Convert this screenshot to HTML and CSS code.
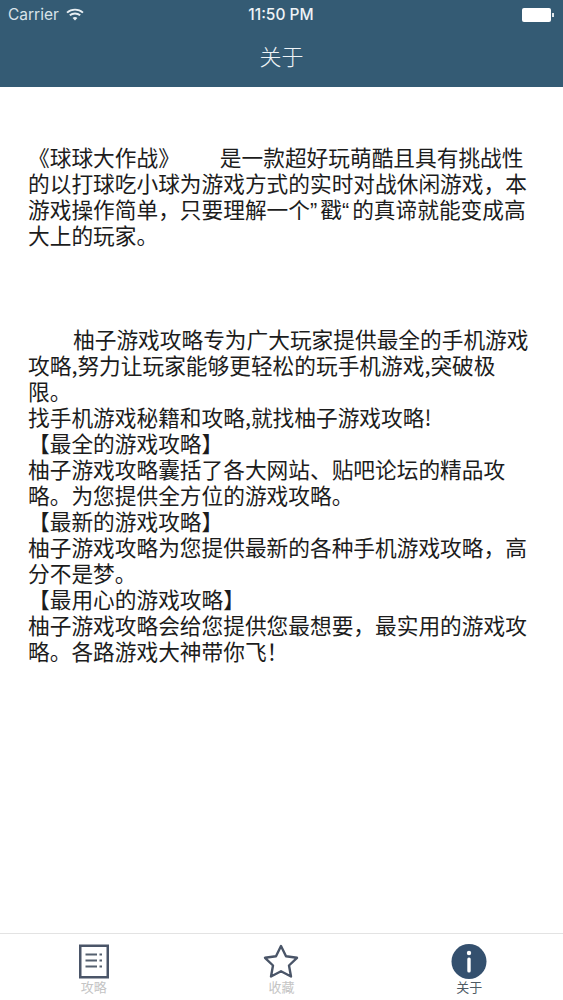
FILE: index.html
```html
<!DOCTYPE html>
<html lang="zh">
<head>
<meta charset="utf-8">
<title>关于</title>
<link rel="stylesheet" href="styles.css">
</head>
<body>
<div class="app">
  <header class="top">
    <div class="status">
      <div class="status-left">
        <span>Carrier</span>
        <svg class="wifi" viewBox="0 0 18 13" width="18" height="13"><path d="M1 4.600C5.600.6 12.400.6 17 4.600" fill="none" stroke="#e9eff3" stroke-width="1.900"/><path d="M3.800 7.300c3-2.500 7.400-2.500 10.400 0" fill="none" stroke="#e9eff3" stroke-width="1.900"/><path d="M6.600 9.900c1.400-1.100 3.400-1.100 4.800 0L9 12.400z" fill="#e9eff3"/></svg>
      </div>
      <div class="status-time">11:50 PM</div>
      <div class="status-right">
        <span class="battery"></span><span class="battery-tip"></span>
      </div>
    </div>
    <div class="nav">关于</div>
  </header>
  <main class="content">
    <p class="para-first">《球球大作战》<span class="gap"></span>是一款超好玩萌酷且具有挑战性的以打球吃小球为游戏方式的实时对战休闲游戏，本游戏操作简单，只要理解一个<span class="quote">”</span>戳<span class="quote">“</span>的真谛就能变成高大上的玩家。</p>
    <p class="para-second"><span class="indent"></span>柚子游戏攻略专为广大玩家提供最全的手机游戏攻略,努力让玩家能够更轻松的玩手机游戏,突破极限。<br>找手机游戏秘籍和攻略,就找柚子游戏攻略!<br>【最全的游戏攻略】<br>柚子游戏攻略囊括了各大网站、贴吧论坛的精品攻略。为您提供全方位的游戏攻略。<br>【最新的游戏攻略】<br>柚子游戏攻略为您提供最新的各种手机游戏攻略，高分不是梦。<br>【最用心的游戏攻略】<br>柚子游戏攻略会给您提供您最想要，最实用的游戏攻略。各路游戏大神带你飞！</p>
  </main>
  <footer class="tabs">
    <div class="tab">
      <svg class="tab-icon" viewBox="0 0 36 36" width="36" height="36"><rect x="4.250" y="1.750" width="27.500" height="31.500" fill="none" stroke="#4a5568" stroke-width="2.500"/><path d="M9.500 10.500h11.500M9.500 16.500h11.500M9.500 22.500h11.500" stroke="#55606f" stroke-width="1.900"/><path d="M23.500 10.500h2.500M23.500 16.500h2.500M23.500 22.500h2.500" stroke="#55606f" stroke-width="1.900"/></svg>
      <span class="tab-label">攻略</span>
    </div>
    <div class="tab">
      <svg class="tab-icon" viewBox="0 0 36 36" width="36" height="36"><path d="M18 2l5 10.300 11 1.500-8 7.700 2 11L18 27.300 8 32.500l2-11-8-7.700 11-1.500z" fill="none" stroke="#4a5568" stroke-width="2.400" stroke-linejoin="round"/></svg>
      <span class="tab-label">收藏</span>
    </div>
    <div class="tab tab-active">
      <svg class="tab-icon" viewBox="0 0 36 36" width="36" height="36"><circle cx="18" cy="17.500" r="17.500" fill="#34506e"/><circle cx="18" cy="9" r="2.200" fill="#fff"/><rect x="16.300" y="13.500" width="3.400" height="15" rx="1.500" fill="#fff"/></svg>
      <span class="tab-label">关于</span>
    </div>
  </footer>
</div>
</body>
</html>
```
FILE: styles.css
```css
* { box-sizing: border-box; }
html, body { margin: 0; padding: 0; background: #fff; }
body { font-family: "Noto Sans CJK SC", "Liberation Sans", sans-serif; }
.app { width: 563px; height: 1000px; display: flex; flex-direction: column; overflow: hidden; }
.top { height: 87px; background: #345b74; color: #eef3f6; flex: none; }
.status { height: 29px; display: grid; grid-template-columns: 1fr auto 1fr; align-items: center; padding: 0 9px 0 8px; font-family: "Inter", "Liberation Sans", sans-serif; font-size: 15.500px; }
.status-left { display: flex; align-items: center; gap: 7px; color: #d9e3e9; }
.wifi { display: block; }
.status-time { font-weight: 500; font-size: 15.500px; }
.status-right { display: flex; justify-content: flex-end; align-items: center; }
.battery { width: 29px; height: 14px; background: #fff; border-radius: 2px; }
.battery-tip { width: 2px; height: 4px; background: #dfe7ec; margin-left: 1px; }
.nav { height: 52px; display: flex; align-items: center; justify-content: center; font-size: 22px; font-weight: 300; }
.content { flex: 1; padding: 0 28px; color: #1c1c1c; font-size: 21.700px; line-height: 26px; }
.content p { margin: 0; }
.para-first { padding-top: 57px; }
.para-second { padding-top: 78px; }
.gap { display: inline-block; width: 40px; }
.quote { font-family: "Liberation Sans", sans-serif; letter-spacing: 3px; line-height: 0; }
.indent { display: inline-block; width: 45px; }
.tabs { height: 67px; flex: none; border-top: 1px solid #e3e3e3; display: grid; grid-template-columns: repeat(3, 1fr); }
.tab { display: flex; flex-direction: column; align-items: center; padding-top: 10px; }
.tab-icon { display: block; }
.tab-label { font-size: 13px; line-height: 16px; color: #c4c4c4; margin-top: -1px; }
.tab-active .tab-label { color: #4d5a63; }
```
